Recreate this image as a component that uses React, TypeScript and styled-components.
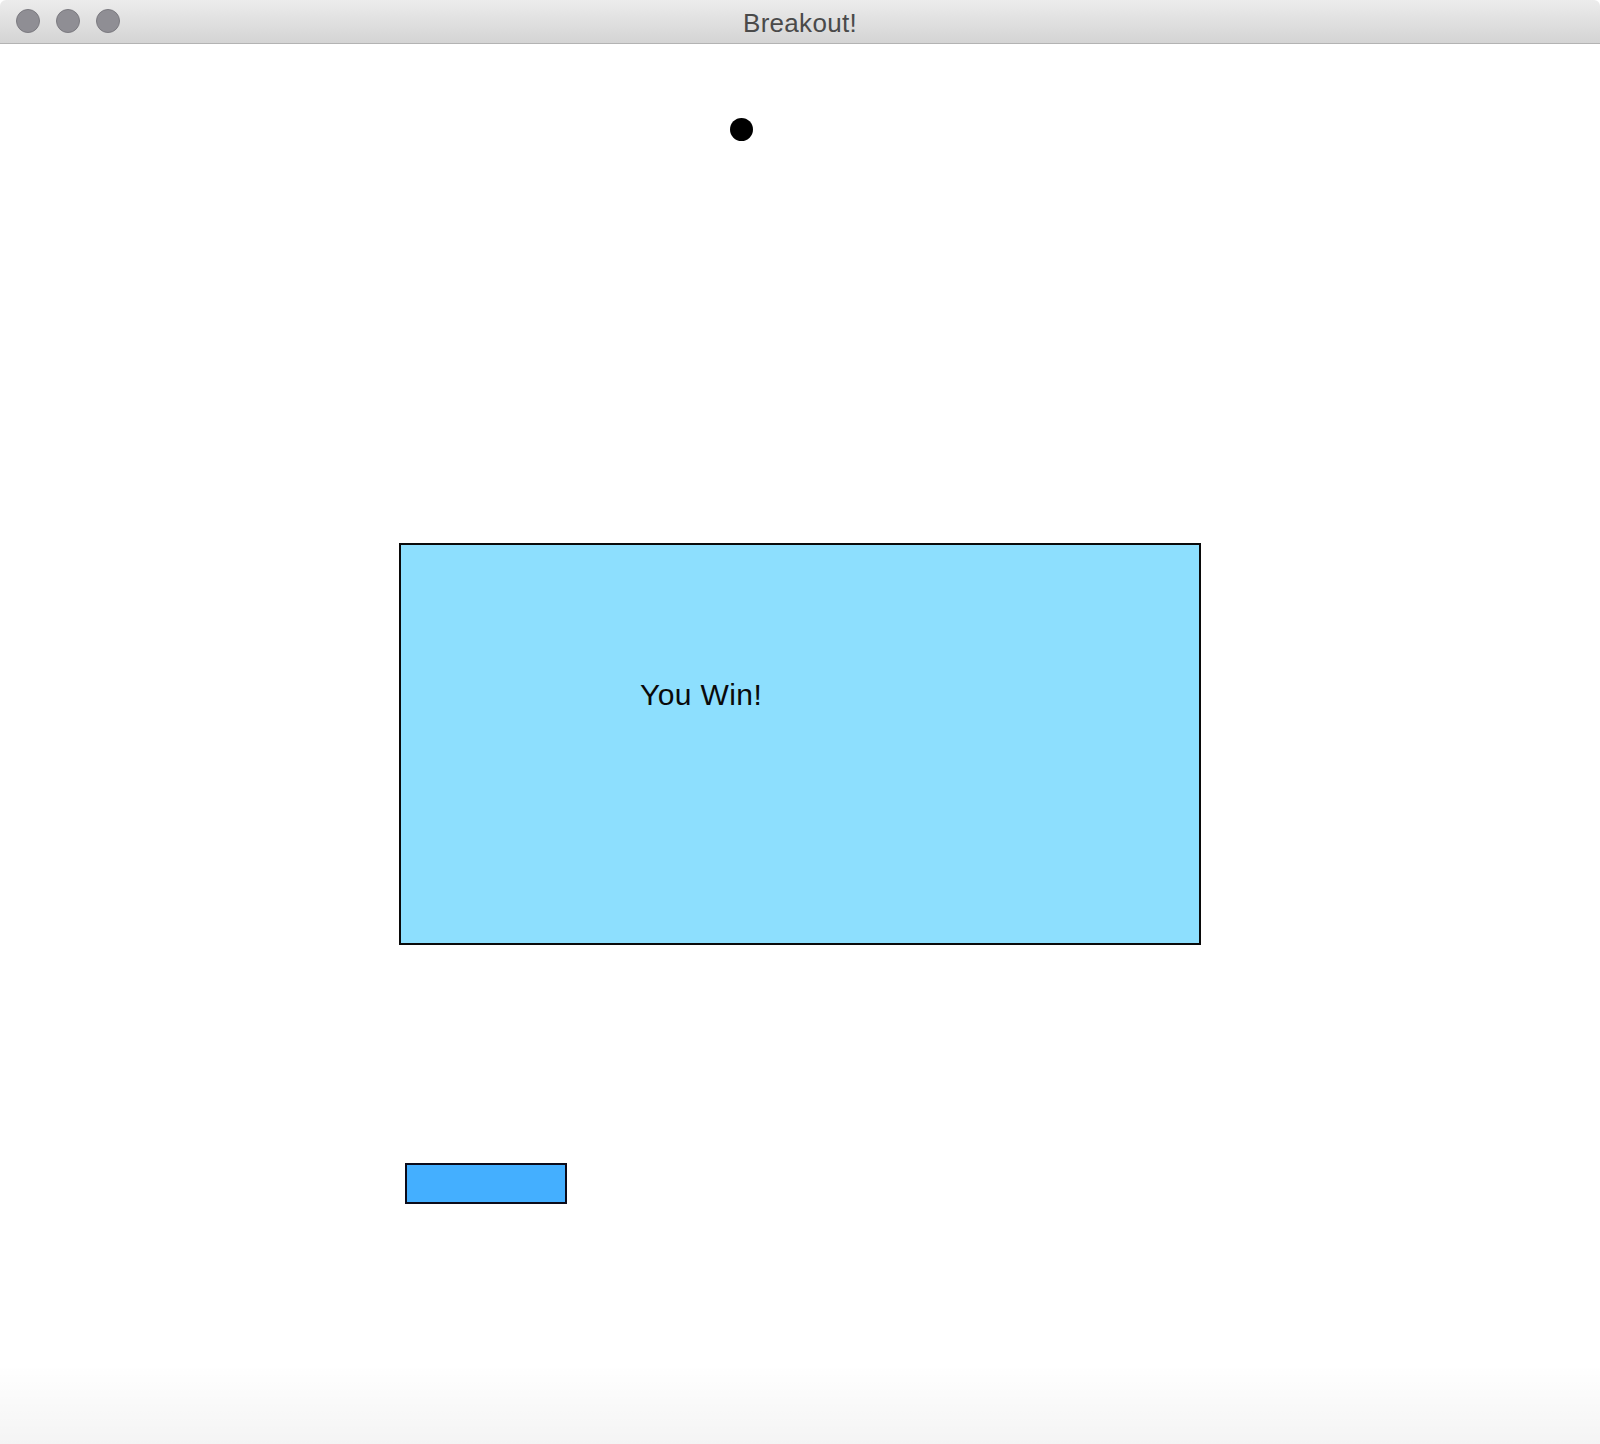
import React from "react";
import styled, { createGlobalStyle } from "styled-components";

const Global = createGlobalStyle`
  html, body { margin: 0; padding: 0; background: #ffffff; }
  body { font-family: "Liberation Sans", Arial, sans-serif; }
`;

const Window = styled.div`
  width: 1600px;
  height: 1444px;
  display: flex;
  flex-direction: column;
  background: #ffffff;
  overflow: hidden;
`;

const TitleBar = styled.header`
  position: relative;
  flex: 0 0 43px;
  display: flex;
  align-items: center;
  justify-content: center;
  background: linear-gradient(#ececec, #d4d4d4);
  border-bottom: 1px solid #b3b3b3;
  border-radius: 6px 6px 0 0;
`;

const Lights = styled.div`
  position: absolute;
  left: 16px;
  top: 9px;
  display: flex;
  gap: 16px;
`;

const Light = styled.span`
  width: 22px;
  height: 22px;
  border-radius: 50%;
  background: #8f8e94;
  border: 1px solid #7b7a80;
`;

const Title = styled.h1`
  margin: 0;
  font-family: "Liberation Sans", Arial, sans-serif;
  font-weight: 400;
  font-size: 26px;
  letter-spacing: 0.3px;
  line-height: 1;
  color: #4a4a4a;
  transform: translateY(1px);
`;

const Canvas = styled.main`
  position: relative;
  flex: 1;
  background: #ffffff;
  &::after {
    content: "";
    position: absolute;
    left: 0;
    right: 0;
    bottom: 0;
    height: 80px;
    background: linear-gradient(rgba(0, 0, 0, 0), rgba(0, 0, 0, 0.045));
    pointer-events: none;
  }
`;

const Ball = styled.div<{ x: number; y: number; d: number }>`
  position: absolute;
  left: ${(p) => p.x}px;
  top: ${(p) => p.y}px;
  width: ${(p) => p.d}px;
  height: ${(p) => p.d}px;
  border-radius: 50%;
  background: #000000;
`;

const Banner = styled.div`
  position: absolute;
  left: 399px;
  top: 499px;
  width: 798px;
  height: 398px;
  background: #8ddffe;
  border: 2px solid #0a0a0a;
`;

const BannerText = styled.span`
  position: absolute;
  left: 239px;
  top: 133px;
  font-family: "Liberation Sans", Arial, sans-serif;
  font-size: 30px;
  letter-spacing: 0.4px;
  line-height: normal;
  color: #0a0a0a;
  white-space: nowrap;
`;

const Paddle = styled.div`
  position: absolute;
  left: 405px;
  top: 1119px;
  width: 158px;
  height: 37px;
  background: #44afff;
  border: 2px solid #0b0b1a;
`;

export default function App() {
  return (
    <>
      <Global />
      <Window>
        <TitleBar>
          <Lights>
            <Light />
            <Light />
            <Light />
          </Lights>
          <Title>Breakout!</Title>
        </TitleBar>
        <Canvas>
          <Ball x={730} y={74} d={23} />
          <Banner>
            <BannerText>You Win!</BannerText>
          </Banner>
          <Paddle />
        </Canvas>
      </Window>
    </>
  );
}
